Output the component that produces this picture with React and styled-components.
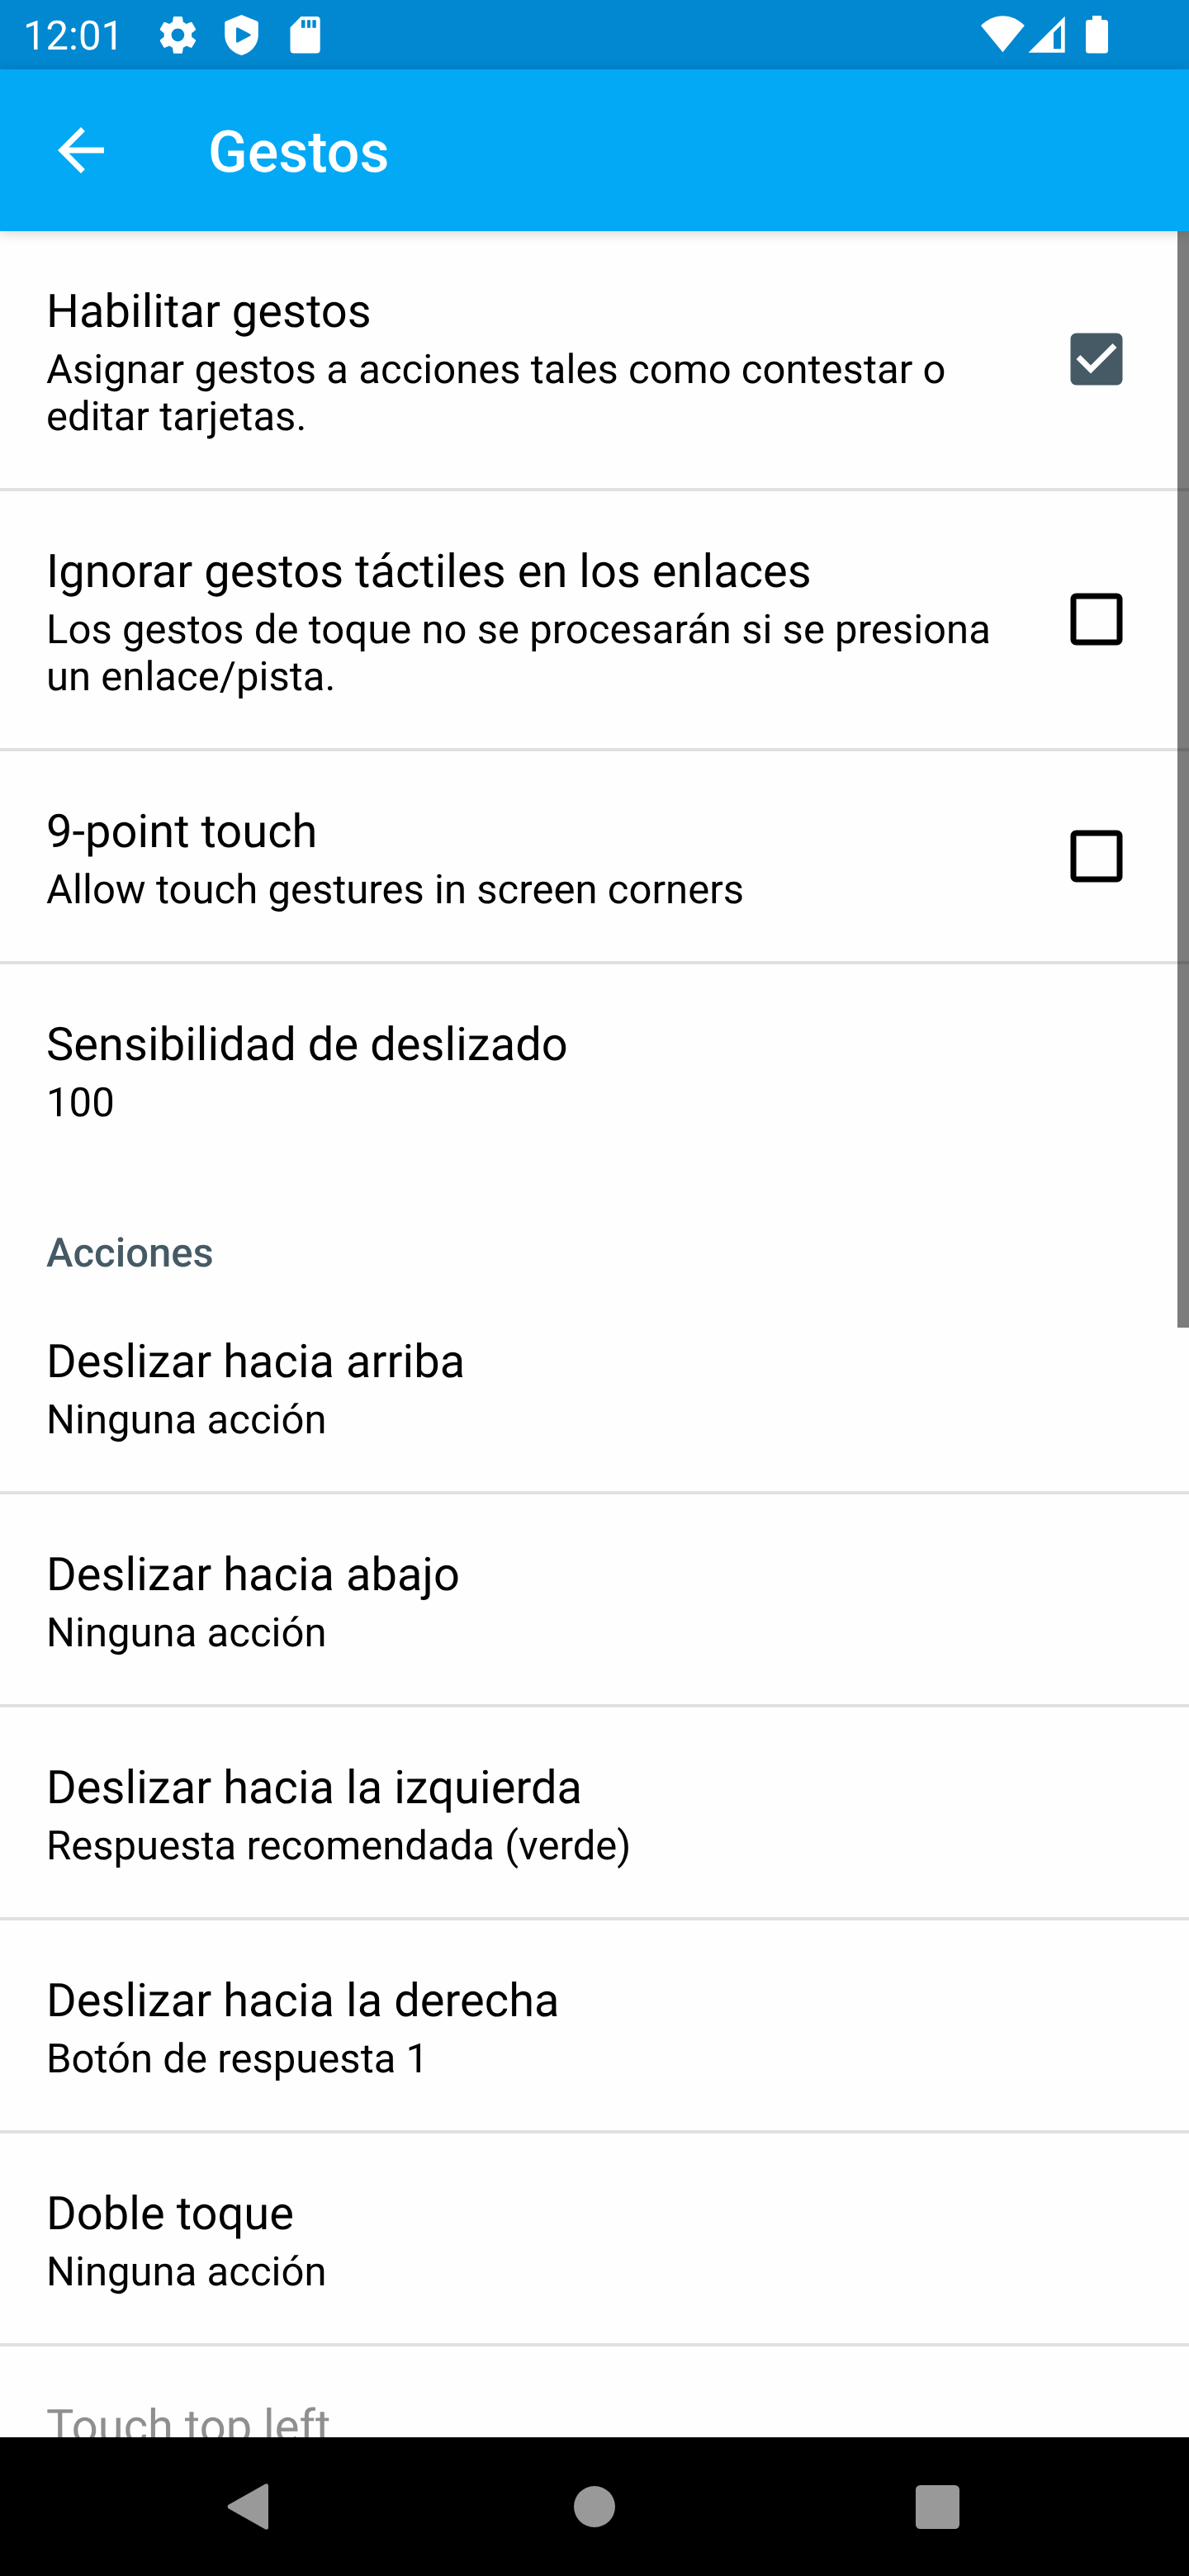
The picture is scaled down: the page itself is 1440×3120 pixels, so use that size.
import React from "react";
import styled, { createGlobalStyle } from "styled-components";
import { MdArrowBack, MdCheckBox, MdCheckBoxOutlineBlank } from "react-icons/md";

const GlobalStyle = createGlobalStyle`
  * { box-sizing: border-box; }
  body {
    margin: 0;
    background: #fefefe;
    font-family: Roboto, "Noto Sans", sans-serif;
    text-rendering: geometricPrecision;
  }
`;

const Screen = styled.div`
  width: 1440px;
  height: 3120px;
  display: flex;
  flex-direction: column;
  overflow: hidden;
  background: #fefefe;
  color: #000;
`;

const StatusBar = styled.header`
  flex: 0 0 84px;
  display: flex;
  justify-content: space-between;
  padding: 0 92px 0 28px;
  background: #0288d1;
  color: #fff;
`;

const StatusGroup = styled.div`
  display: flex;
  align-items: center;
`;

const Clock = styled.span`
  width: 156px;
  padding-top: 4px;
  font-size: 49px;
  line-height: 58px;
  white-space: nowrap;
`;

const Glyph = styled.svg`
  display: block;
  flex: none;
  fill: currentColor;
`;

const AppBar = styled.div`
  flex: 0 0 196px;
  display: flex;
  align-items: center;
  padding-left: 56px;
  gap: 112px;
  background: #03a9f4;
  color: #fff;
  box-shadow: 0 2px 14px rgba(0, 0, 0, 0.18);
  z-index: 1;
`;

const BarTitle = styled.h1`
  margin: 0;
  padding-top: 6px;
  font-size: 70px;
  font-weight: 500;
  line-height: 82px;
`;

const Content = styled.main`
  position: relative;
  flex: 1 1 0;
  min-height: 0;
  overflow: hidden;
`;

const ScrollThumb = styled.div`
  position: absolute;
  top: 0;
  right: 0;
  width: 14px;
  height: 1328px;
  background: rgba(0, 0, 0, 0.514);
`;

const Row = styled.section`
  display: flex;
  align-items: center;
  justify-content: space-between;
  padding: 60px 70px 58px 56px;
  border-bottom: ${(p) => (p.$divider ? "4px solid #e0e0e0" : "none")};
  color: ${(p) => (p.$disabled ? "#8f8f8f" : "#000")};
`;

const Labels = styled.div`
  width: 1174px;
`;

const RowTitle = styled.div`
  font-size: 56px;
  line-height: 74px;
  letter-spacing: 0.05px;
  margin-bottom: 5px;
`;

const Summary = styled.div`
  font-size: 49px;
  line-height: 57px;
  letter-spacing: 0.03px;
`;

const Toggle = styled.span`
  display: flex;
  margin: -42px 0;
  padding-bottom: 3px;
  color: ${(p) => (p.$on ? "#455a64" : "#000")};
`;

const Category = styled.h2`
  height: 130px;
  margin: 0;
  padding: 67px 56px 0;
  font-size: 49px;
  font-weight: 500;
  line-height: 57px;
  color: #455a64;
`;

const NavBar = styled.nav`
  flex: 0 0 168px;
  display: flex;
  align-items: center;
  justify-content: space-between;
  padding: 0 278px 0 274px;
  background: #000;
  color: #999;
`;

const toggles = [
  { title: "Habilitar gestos", lines: ["Asignar gestos a acciones tales como contestar o", "editar tarjetas."], on: true },
  { title: "Ignorar gestos táctiles en los enlaces", lines: ["Los gestos de toque no se procesarán si se presiona", "un enlace/pista."], on: false },
  { title: "9-point touch", lines: ["Allow touch gestures in screen corners"], on: false },
];

const actions = [
  ["Deslizar hacia arriba", "Ninguna acción"],
  ["Deslizar hacia abajo", "Ninguna acción"],
  ["Deslizar hacia la izquierda", "Respuesta recomendada (verde)"],
  ["Deslizar hacia la derecha", "Botón de respuesta 1"],
  ["Doble toque", "Ninguna acción"],
];

function Preference({ title, lines, on, divider = true, disabled }) {
  return (
    <Row $divider={divider} $disabled={disabled}>
      <Labels>
        <RowTitle>{title}</RowTitle>
        {lines.map((line) => (
          <Summary key={line}>{line}</Summary>
        ))}
      </Labels>
      {on !== undefined && (
        <Toggle $on={on}>
          {on ? <MdCheckBox size={84} /> : <MdCheckBoxOutlineBlank size={84} />}
        </Toggle>
      )}
    </Row>
  );
}

export default function App() {
  return (
    <Screen>
      <GlobalStyle />
      <StatusBar>
        <StatusGroup>
          <Clock>12:01</Clock>
          <Glyph width="216" height="84" viewBox="184 0 216 84">
            <path
              transform="translate(188.6 15.5) scale(2.235)"
              d="M19.43 12.98c.04-.32.07-.64.07-.98s-.03-.66-.07-.98l2.11-1.65c.19-.15.24-.42.12-.64l-2-3.46c-.12-.22-.39-.3-.61-.22l-2.49 1c-.52-.4-1.08-.73-1.69-.98l-.38-2.65C14.46 2.18 14.25 2 14 2h-4c-.25 0-.46.18-.49.42l-.38 2.65c-.61.25-1.17.59-1.69.98l-2.49-1c-.23-.09-.49 0-.61.22l-2 3.46c-.13.22-.07.49.12.64l2.11 1.65c-.04.32-.07.65-.07.98s.03.66.07.98l-2.11 1.65c-.19.15-.24.42-.12.64l2 3.46c.12.22.39.3.61.22l2.49-1c.52.4 1.08.73 1.69.98l.38 2.65c.03.24.24.42.49.42h4c.25 0 .46-.18.49-.42l.38-2.65c.61-.25 1.17-.59 1.69-.98l2.49 1c.23.09.49 0 .61-.22l2-3.46c.12-.22.07-.49-.12-.64l-2.11-1.65zM12 15.5c-1.93 0-3.5-1.57-3.5-3.5s1.57-3.5 3.5-3.5 3.5 1.57 3.5 3.5-1.57 3.5-3.5 3.5z"
            />
            <path
              fillRule="evenodd"
              d="M292.5 18l18.7 7.4q1.6.8 1.6 2.6v14.5c0 11.500-8.500 21.500-20.300 24.500c-11.800-3-20.300-13-20.300-24.500V28q0-1.800 1.600-2.600zM288.300 33.600q-2.300-1.200-2.300 1.200v15.200q0 2.500 2.300 1.300l14.700-7.700q1.800-1.200 0-2.300z"
            />
            <path
              fillRule="evenodd"
              d="M364.500 20H383.500q4.200 0 4.200 4.200V60.300q0 4.200-4.200 4.200H355.700q-4.200 0-4.200-4.200V33.200zM365 24.200v9.600h4.500v-9.600zM372 24.200v9.600h4v-9.600zM378.400 24.200v9.600h4.400v-9.600z"
            />
          </Glyph>
        </StatusGroup>
        <StatusGroup>
          <Glyph width="168" height="84" viewBox="1180 0 168 84">
            <path d="M1214.400 63.300L1188 31C1203 15.200 1226 15.200 1240.800 31z" />
            <path fillRule="evenodd" d="M1245.500 63.700L1289.700 19.700V63.700zM1276 39.400V59.200H1285V30.600z" />
            <path d="M1323 24V19H1334V24H1338.500Q1342 24 1342 27.500V61Q1342 64.500 1338.500 64.500H1318.500Q1315 64.500 1315 61V27.500Q1315 24 1318.500 24z" />
          </Glyph>
        </StatusGroup>
      </StatusBar>
      <AppBar>
        <MdArrowBack size={84} />
        <BarTitle>Gestos</BarTitle>
      </AppBar>
      <Content>
        {toggles.map((item) => (
          <Preference key={item.title} {...item} />
        ))}
        <Preference title="Sensibilidad de deslizado" lines={["100"]} divider={false} />
        <Category>Acciones</Category>
        {actions.map(([title, summary]) => (
          <Preference key={title} title={title} lines={[summary]} />
        ))}
        <Preference title="Touch top left" lines={[]} disabled />
        <ScrollThumb />
      </Content>
      <NavBar>
        <Glyph width="57" height="58" viewBox="0 0 57 58">
          <path d="M51 4.500v49q0 4.500-4 2.800L2.700 31.200Q0.500 29 2.700 26.800L47 1.700Q51 0 51 4.500z" />
        </Glyph>
        <Glyph width="50" height="50" viewBox="0 0 50 50">
          <circle cx="25" cy="25" r="25" />
        </Glyph>
        <Glyph width="53" height="53" viewBox="0 0 53 53">
          <rect width="53" height="53" rx="5.500" />
        </Glyph>
      </NavBar>
    </Screen>
  );
}
